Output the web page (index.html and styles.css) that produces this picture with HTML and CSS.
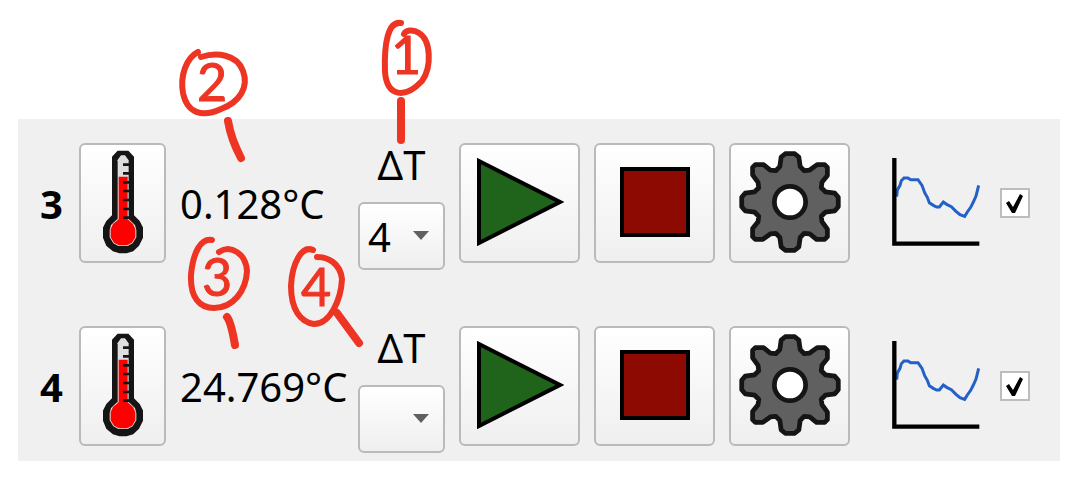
FILE: index.html
```html
<!DOCTYPE html>
<html lang="en">
<head>
<meta charset="utf-8">
<meta name="viewport" content="width=device-width, initial-scale=1">
<title>Temperature channels</title>
<link rel="stylesheet" href="styles.css">
</head>
<body>
<svg class="defs" aria-hidden="true">
  <symbol id="thermometer" viewBox="0 0 120 312">
    <path d="M32 22L46 7H74L88 22V198L106 216L115 234V262L104 284L88 299L70 305H50L32 299L14 284L5 262V234L14 216L32 198Z" fill="#151515" stroke="#151515" stroke-width="10"/>
    <path d="M42 32L54 16H66L78 32V208L96 225L100 240V262L89 280L74 288H46L31 280L20 262V240L24 225L42 208Z" fill="#dedede"/>
    <path d="M47 80H74V208L90 222L97 238V262L87 278L72 286H48L33 278L23 262V238L30 222L47 208Z" fill="#f00"/>
    <path d="M41 32V208M80 32V208" stroke="#151515" stroke-width="6"/>
    <path d="M60 44H80M60 70H80M60 97H80M60 123H80M60 150H80M60 177H80M60 203H80" stroke="#151515" stroke-width="8"/>
  </symbol>
  <symbol id="play" viewBox="0 0 88 88">
    <path d="M3 3L84 44L3 85Z" fill="#20641b" stroke="#000" stroke-width="4"/>
  </symbol>
  <symbol id="stop" viewBox="0 0 70 70">
    <path d="M2 2H68V68H2Z" fill="#8c0a02" stroke="#000" stroke-width="4"/>
  </symbol>
  <symbol id="gear" viewBox="-150 -150 300 300">
    <path d="M-42-92L-30-104L-26-132L-14-142H14L26-132L30-104L42-92L58-94L80-110H102L110-102V-78L94-58L92-42L104-30L132-26L142-14V14L132 26L104 30L92 42L94 58L110 80V102L102 110H78L58 94L42 92L30 104L26 132L14 142H-14L-26 132L-30 104L-42 92L-58 94L-80 110H-102L-110 102V78L-94 58L-92 42L-104 30L-132 26L-142 14V-14L-132-26L-104-30L-92-42L-94-58L-110-80V-102L-102-110H-78L-58-94Z" fill="#606060" stroke="#151515" stroke-width="14" stroke-linejoin="round"/>
    <circle r="46" fill="#fff" stroke="#151515" stroke-width="14"/>
  </symbol>
  <symbol id="chart" viewBox="0 0 264 264">
    <path d="M14 116L16 96L24 82L28 68L36 60H48L56 65H78L90 82L98 104L106 118L112 134L124 142L134 147H142L154 132L164 139L178 146L192 160L204 170L218 175L226 162L236 148L244 132L252 114L260 82" fill="none" stroke="#2360c8" stroke-width="9"/>
    <path d="M7 0V257H262" fill="none" stroke="#000" stroke-width="13"/>
  </symbol>
</svg>

<main class="screen">
  <section class="panel" aria-label="Channels">
    <div class="channel">
      <span class="number">3</span>
      <button class="tool" type="button" aria-label="Channel 3 sensor"><svg class="icon-thermometer"><use href="#thermometer"/></svg></button>
      <output class="value">0.128°C</output>
      <div class="delta">
        <label class="delta-label" for="delta-3">ΔT</label>
        <div class="picker">
          <select class="select" id="delta-3"><option selected>4</option><option>3</option></select>
        </div>
      </div>
      <button class="tool" type="button" aria-label="Start channel 3"><svg class="icon-play"><use href="#play"/></svg></button>
      <button class="tool" type="button" aria-label="Stop channel 3"><svg class="icon-stop"><use href="#stop"/></svg></button>
      <button class="tool" type="button" aria-label="Channel 3 settings"><svg class="icon-gear"><use href="#gear"/></svg></button>
      <label class="plot" for="plot-3" aria-label="Plot channel 3"><svg class="icon-chart"><use href="#chart"/></svg></label>
      <input class="check" id="plot-3" type="checkbox" checked>
    </div>
    <div class="channel">
      <span class="number">4</span>
      <button class="tool" type="button" aria-label="Channel 4 sensor"><svg class="icon-thermometer"><use href="#thermometer"/></svg></button>
      <output class="value">24.769°C</output>
      <div class="delta">
        <label class="delta-label" for="delta-4">ΔT</label>
        <div class="picker">
          <select class="select" id="delta-4"><option selected></option><option>3</option></select>
        </div>
      </div>
      <button class="tool" type="button" aria-label="Start channel 4"><svg class="icon-play"><use href="#play"/></svg></button>
      <button class="tool" type="button" aria-label="Stop channel 4"><svg class="icon-stop"><use href="#stop"/></svg></button>
      <button class="tool" type="button" aria-label="Channel 4 settings"><svg class="icon-gear"><use href="#gear"/></svg></button>
      <label class="plot" for="plot-4" aria-label="Plot channel 4"><svg class="icon-chart"><use href="#chart"/></svg></label>
      <input class="check" id="plot-4" type="checkbox" checked>
    </div>
  </section>

  <svg class="notes" width="480" height="360" viewBox="0 0 480 360">
    <g class="ring">
      <path d="M401 23C388 21 384 43 385 72C387 97 405 99 422 81C432 67 431 40 419 33C413 29 406 30 404 34"/>
      <path d="M198 52C186 58 180 76 183 93C187 113 202 118 221 109C240 102 249 87 243 71C237 54 216 52 201 57"/>
      <path d="M212 240C201 238 193 252 191 275C190 298 200 308 214 308C233 308 246 291 247 271C246 254 231 244 219 252"/>
      <path d="M313 250C302 245 292 263 291 286C291 309 300 322 314 324C330 324 341 300 342 279C340 263 328 257 317 257"/>
    </g>
    <g class="pointer">
      <path d="M401 101L401 140"/>
      <path d="M228 121Q231 139 241 158"/>
      <path d="M227 317Q231 322 235 345"/>
      <path d="M337 313L359 343"/>
    </g>
    <g class="digit">
      <text x="406" y="74">1</text>
      <text x="212" y="101">2</text>
      <text x="217" y="296">3</text>
      <text x="316" y="306">4</text>
    </g>
  </svg>
</main>
</body>
</html>
```
FILE: styles.css
```css
* {
  box-sizing: border-box;
}

body {
  margin: 0;
  background: #fff;
  color: #000;
  font-family: "Noto Sans", sans-serif;
  font-size: 40px;
}

.defs {
  position: absolute;
  width: 0;
  height: 0;
}

.screen {
  position: relative;
  padding: 119px 17px 17px 18px;
}

.panel {
  display: flex;
  flex-direction: column;
  gap: 56px;
  padding: 24px 30px 8px 22px;
  background: #f0f0f0;
}

.channel {
  display: grid;
  grid-template-columns: 25px 87px minmax(0, 1fr) 87px 121px 121px 121px 122px 30px;
  grid-auto-rows: 120px;
  gap: 14px;
  align-items: center;
  padding-bottom: 7px;
}

.number {
  font-weight: 700;
}

.value {
  white-space: nowrap;
}

.tool {
  display: flex;
  align-items: center;
  justify-content: center;
  height: 120px;
  padding: 0 0 2px;
  border: 2px solid #bababa;
  border-radius: 6px;
  background: linear-gradient(#fff, #efefef);
}

.icon-thermometer {
  width: 40px;
  height: 104px;
}

.icon-play {
  width: 88px;
  height: 88px;
}

.icon-stop {
  width: 70px;
  height: 70px;
}

.icon-gear {
  width: 102px;
  height: 102px;
}

.icon-chart {
  display: block;
  width: 88px;
  height: 88px;
}

.delta {
  display: flex;
  flex-direction: column;
  align-self: start;
  gap: 15px;
}

.delta-label {
  line-height: 44px;
  text-align: center;
}

.picker {
  position: relative;
}

.picker::after {
  content: "";
  position: absolute;
  top: 29px;
  right: 16px;
  border: 8px solid transparent;
  border-top: 9px solid #606060;
  border-bottom: 0;
  pointer-events: none;
}

.select {
  display: block;
  width: 100%;
  height: 68px;
  padding: 0 8px;
  appearance: none;
  border: 2px solid #bababa;
  border-radius: 6px;
  background: linear-gradient(#fff, #efefef);
  color: #000;
  font: inherit;
}

.plot {
  justify-self: end;
  padding: 0 6px 2px 0;
}

.check {
  width: 30px;
  height: 30px;
  margin: 0;
  appearance: none;
  border: 2px solid #bdbdbd;
  background: #fff;
}

.check:checked::before {
  content: "";
  display: block;
  width: 26px;
  height: 26px;
  background: #000;
  clip-path: polygon(4px 13px, 7px 11px, 11px 17px, 18px 4px, 21px 6px, 13px 23px, 10px 23px);
}

.notes {
  position: absolute;
  top: 0;
  left: 0;
  pointer-events: none;
}

.ring,
.pointer {
  fill: none;
  stroke: #ee3524;
  stroke-width: 6;
  stroke-linecap: round;
  stroke-linejoin: round;
}

.pointer {
  stroke-width: 8;
}

.digit {
  fill: #ee3524;
  stroke: #ee3524;
  stroke-width: 1;
  font-family: Lato, sans-serif;
  font-size: 52px;
  text-anchor: middle;
}
```
